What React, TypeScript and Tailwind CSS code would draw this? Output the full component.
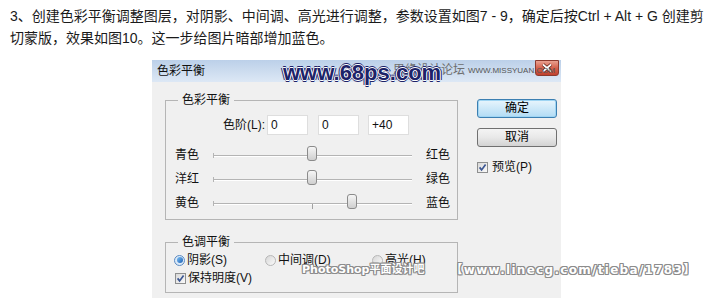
import React from 'react';

const ui = "font-['Liberation_Sans','Noto_Sans_CJK_SC',sans-serif]";

function Check() {
  return (
    <span className="flex h-[11px] w-[11px] shrink-0 items-center justify-center border border-[#8e8f8f] bg-linear-to-br from-[#d9d9d9] to-[#fafafa]">
      <svg width="9" height="9" viewBox="0 0 9 9">
        <path d="M1.6 4.4 L3.6 6.9 L7.6 1.6" fill="none" stroke="#3b5692" strokeWidth="1.7" />
      </svg>
    </span>
  );
}

function Radio({ on }: { on?: boolean }) {
  if (on) {
    return (
      <span className="flex h-[11px] w-[11px] shrink-0 items-center justify-center rounded-full border border-[#5b8ac2] bg-[#dbe9f7]">
        <span className="h-[6px] w-[6px] rounded-full bg-linear-to-br from-[#7cc0f4] to-[#1a5fb4]" />
      </span>
    );
  }
  return <span className="h-[11px] w-[11px] shrink-0 rounded-full border border-[#b7b7b7] bg-linear-to-br from-[#d6d6d6] to-[#fbfbfb]" />;
}

function Field({ value, className }: { value: string; className: string }) {
  return (
    <span className={`flex h-[20px] w-[41px] items-center border border-[#dedede] bg-white pl-[3px] ${className}`}>
      {value}
    </span>
  );
}

function Slider({ left, right, thumb, tick }: { left: string; right: string; thumb: string; tick?: boolean }) {
  return (
    <div className="flex h-[24px] items-center pl-[9px]">
      <span className="w-[38px]">{left}</span>
      <div className="relative h-[18px] w-[199px]">
        <div className="absolute left-0 right-0 top-[9px] h-px bg-[#b4b4b4]" />
        <div className="absolute left-0 right-0 top-[10px] h-px bg-white" />
        <div className="absolute left-0 top-[7px] h-[5px] w-px bg-[#b4b4b4]" />
        {tick && <div className="absolute left-[99px] top-[10px] h-[5px] w-px bg-[#a2a2a2]" />}
        <div className={`absolute top-0 h-[15px] w-[10px] rounded-[3px] border border-[#8b8b8b] bg-linear-to-b from-[#f6f6f6] to-[#cfcfcf] ${thumb}`} />
      </div>
      <span className="ml-[14px]">{right}</span>
    </div>
  );
}

function CloseButton() {
  return (
    <div className="mr-[2px] flex h-[16px] w-[24px] items-center justify-center rounded-b-[3px] border border-[#8d3a2e] bg-linear-to-b from-[#e8a090] via-[#d4604c] to-[#c0412e]">
      <svg width="12" height="10" viewBox="0 0 12 10">
        <path d="M2 1.5 L10 8.5 M10 1.5 L2 8.5" stroke="#5a2018" strokeWidth="3.2" />
        <path d="M2 1.5 L10 8.5 M10 1.5 L2 8.5" stroke="#ffffff" strokeWidth="1.7" />
      </svg>
    </div>
  );
}

const halo =
  '[text-shadow:1px_0_#8c8c8c,-1px_0_#8c8c8c,0_1px_#8c8c8c,0_-1px_#8c8c8c,1px_1px_#8c8c8c,-1px_-1px_#8c8c8c,1px_-1px_#8c8c8c,-1px_1px_#8c8c8c]';

export default function App() {
  return (
    <div className={`relative h-[298px] w-[709px] overflow-hidden bg-white ${ui}`}>
      <div className="whitespace-nowrap pl-[10px] pt-[5px] text-[14px] leading-[22px] text-[#1a1a1a]">
        3、创建色彩平衡调整图层，对阴影、中间调、高光进行调整，参数设置如图7 - 9，确定后按Ctrl + Alt + G 创建剪
        <br />
        切蒙版，效果如图10。这一步给图片暗部增加蓝色。
      </div>

      <div className="ml-[152px] mt-[11px] w-[409px] text-[12px] text-[#111]">
        <div className="flex h-[22px] items-start justify-between bg-linear-to-b from-[#bcd0e9] to-[#dde8f5]">
          <span className="pl-[5px] leading-[22px]">色彩平衡</span>
          <CloseButton />
        </div>

        <div className="flex h-[216px] bg-[#f0f0f0]">
          <div className="pl-[13px]">
            <fieldset className="mt-[10px] w-[293px] border border-[#b5b5b5] pb-[4px]">
              <legend className="ml-[12px] px-[4px] leading-[16px]">色彩平衡</legend>
              <div className="mt-[7px] flex h-[20px] items-center">
                <span className="w-[99px] text-right">色阶(L):</span>
                <Field value="0" className="ml-[2px]" />
                <Field value="0" className="ml-[10px]" />
                <Field value="+40" className="ml-[9px]" />
              </div>
              <div className="mt-[8px]">
                <Slider left="青色" right="红色" thumb="left-[94px]" />
                <Slider left="洋红" right="绿色" thumb="left-[94px]" />
                <Slider left="黄色" right="蓝色" thumb="left-[134px]" tick />
              </div>
            </fieldset>

            <fieldset className="mt-[14px] w-[293px] border border-[#b5b5b5] pb-[5px]">
              <legend className="ml-[12px] px-[4px] leading-[16px]">色调平衡</legend>
              <div className="mt-[1px] flex h-[18px] items-center pl-[8px]">
                <Radio on />
                <span className="ml-[2px] w-[78px]">阴影(S)</span>
                <Radio />
                <span className="ml-[2px] w-[94px]">中间调(D)</span>
                <Radio />
                <span className="ml-[2px]">高光(H)</span>
              </div>
              <div className="flex h-[18px] items-center pl-[9px]">
                <Check />
                <span className="ml-[2px]">保持明度(V)</span>
              </div>
            </fieldset>
          </div>

          <div className="ml-[19px] flex flex-col">
            <button className="mt-[17px] h-[19px] w-[80px] rounded-[3px] border border-[#3c7fb1] bg-linear-to-b from-[#e8f5fd] to-[#b2dcf4] leading-[17px] text-black shadow-[inset_0_0_0_1px_#9fd5f3]">
              确定
            </button>
            <button className="mt-[10px] h-[19px] w-[80px] rounded-[3px] border border-[#707070] bg-linear-to-b from-[#f4f4f4] via-[#e8e8e8] to-[#d3d3d3] leading-[17px] text-black">
              取消
            </button>
            <div className="mt-[13px] flex h-[14px] items-center">
              <Check />
              <span className="ml-[4px]">预览(P)</span>
            </div>
          </div>
        </div>
      </div>

      <span className="absolute left-[393px] top-[63px] text-[12px] leading-[14px] text-[#6e6e6e]">思缘设计论坛</span>
      <span className="absolute left-[468px] top-[66px] text-[8px] leading-[10px] text-[#555]">WWW.MISSYUAN.COM</span>
      <span className="absolute left-[283px] top-[62px] text-[22px] font-bold leading-[22px] text-[#1d2368] [text-shadow:1px_0_#fff,-1px_0_#fff,0_1px_#fff,0_-1px_#fff,2px_0_#1d2368,-2px_0_#1d2368,0_2px_#1d2368,0_-2px_#1d2368]">
        www.68ps.com
      </span>
      <div className={`absolute left-[302px] top-[262px] flex items-center whitespace-nowrap font-['DejaVu_Sans','Noto_Sans_CJK_SC',sans-serif] font-bold leading-[16px] text-white ${halo}`}>
        <span className="text-[11px]">PhotoShop平面设计吧</span>
        <span className="ml-[26px] text-[12px] tracking-[1.3px]">【www.linecg.com/tieba/1783】</span>
      </div>
    </div>
  );
}
